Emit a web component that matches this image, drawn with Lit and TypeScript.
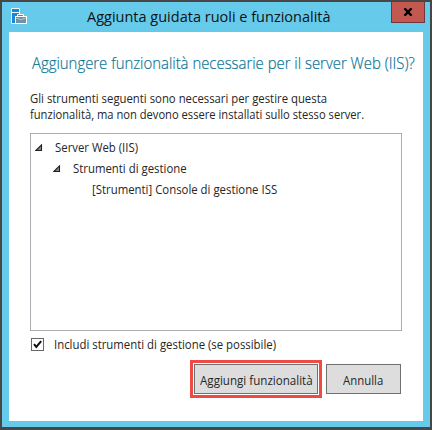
import { LitElement, html, css } from "lit";
import { customElement, state } from "lit/decorators.js";

const arrow = html`<svg class="arrow" width="8" height="8" viewBox="0 0 8 8">
  <path d="M0.9 6.5 L6.5 0.9 V6.5 Z" fill="#888" stroke="#222" stroke-width="1.1" />
</svg>`;

@customElement("app-root")
export class AppRoot extends LitElement {
  @state() private includeTools = true;

  static styles = css`
    :host {
      display: block;
      width: 432px;
      height: 430px;
      font-family: "Open Sans", "Noto Sans", sans-serif;
      font-size: 12px;
      color: #262626;
      white-space: nowrap;
    }
    * { box-sizing: border-box; }
    .window {
      width: 432px;
      height: 430px;
      border: 2px solid #474747;
      border-bottom-width: 3px;
      background: #66caea;
      display: flex;
      flex-direction: column;
      padding: 0 7px 5px;
    }
    .titlebar {
      height: 29px;
      flex: none;
      display: flex;
      align-items: flex-start;
    }
    .app-icon { margin: 6px 0 0 2px; display: block; }
    .title {
      flex: 1;
      margin: 4px 0 0 59px;
      font-size: 14.5px;
      line-height: 22px;
      color: #111;
    }
    .close {
      width: 34px;
      height: 21px;
      margin-right: -2px;
      padding: 0;
      background: #c35850;
      border: 1px solid #70383c;
      border-top: 0;
      display: flex;
      align-items: center;
      justify-content: center;
    }
    .body {
      flex: 1;
      background: #fff;
      padding: 19px 21px 0;
      border-top: 1px solid #8fb9cb;
      border-bottom: 1px solid #8fb9cb;
    }
    h1 {
      margin: 0 0 0 2px;
      font-size: 16.5px;
      line-height: 24px;
      font-weight: 300;
      color: #0b7596;
      -webkit-text-stroke: 0.2px #0b7596;
      width: max-content;
      transform: scaleX(0.903);
      transform-origin: left;
    }
    .intro { margin: 16px 0 0; line-height: 16px; }
    .line { display: block; width: max-content; }
    .narrow { display: inline-block; transform: scaleX(0.948); transform-origin: left; }
    .p1 { transform: scaleX(0.945); transform-origin: left; }
    .p2 { transform: scaleX(0.931); transform-origin: left; }
    .tree {
      margin-top: 10px;
      width: 372px;
      height: 198px;
      border: 1px solid #abadb3;
      padding: 3px 4px;
    }
    .node { display: flex; align-items: center; height: 21px; }
    .l2 { padding-left: 18px; }
    .l3 { padding-left: 57px; }
    .arrow { margin-right: 12px; }
    .check { display: flex; align-items: center; margin: 5px 0 0 1px; height: 17px; }
    .box {
      width: 13px;
      height: 13px;
      border: 1px solid #666;
      margin-right: 10px;
      display: flex;
    }
    .actions { display: flex; align-items: center; justify-content: flex-end; gap: 4px; margin: 7px 1px 0 0; }
    .focus { border: 3px solid #ee4b47; padding: 1px; }
    .btn {
      display: flex;
      align-items: center;
      justify-content: center;
      height: 30px;
      padding: 2px 0 0;
      font: inherit;
      color: inherit;
      background: #ddd;
      border: 1px solid #707070;
    }
    .btn .narrow { transform-origin: center; }
    .btn .wide { transform: scaleX(0.965); }
    .add { width: 124px; }
    .cancel { width: 75px; }
  `;

  render() {
    return html`<div class="window">
      <div class="titlebar">
        <svg class="app-icon" width="17" height="17" viewBox="0 0 17 17">
          <path d="M0.5 0.5 H8.5 V15.5 H0.5 Z" fill="#1c86d6" stroke="#e8f6fc" />
          <path d="M1 4.5 H8" stroke="#e8f6fc" />
          <path d="M6.5 9 V6.5 H12.5 V9" fill="none" stroke="#fff" />
          <path d="M7.5 9 V7.5 H11.5 V9" fill="none" stroke="#6a7f8c" />
          <rect x="4.5" y="8.5" width="11" height="7" fill="#7391a5" stroke="#fff" />
          <path d="M5 10.5 H8 V11.5 H12 V10.5 H15" fill="none" stroke="#c9d8e1" stroke-width=".6" />
        </svg>
        <div class="title">Aggiunta guidata ruoli e funzionalità</div>
        <button class="close" aria-label="Chiudi">
          <svg width="10" height="8" viewBox="0 0 10 8"><path d="M1.5 0.3 L8.5 7.7 M8.5 0.3 L1.5 7.7" stroke="#000" stroke-width="2.4" /></svg>
        </button>
      </div>
      <div class="body">
        <h1>Aggiungere funzionalità necessarie per il server Web (IIS)?</h1>
        <p class="intro">
          <span class="line p1">Gli strumenti seguenti sono necessari per gestire questa</span>
          <span class="line p2">funzionalità, ma non devono essere installati sullo stesso server.</span>
        </p>
        <div class="tree">
          <div class="node">${arrow}<span class="narrow">Server Web (IIS)</span></div>
          <div class="node l2">${arrow}<span class="narrow">Strumenti di gestione</span></div>
          <div class="node l3"><span class="narrow">[Strumenti] Console di gestione ISS</span></div>
        </div>
        <div class="check" @click=${() => (this.includeTools = !this.includeTools)}>
          <span class="box">${this.includeTools
            ? html`<svg width="11" height="11" viewBox="0 0 11 11"><path d="M2 5.2 L4.3 8 L9.2 2.2" fill="none" stroke="#111" stroke-width="2" /></svg>`
            : ""}</span>
          <span class="narrow">Includi strumenti di gestione (se possibile)</span>
        </div>
        <div class="actions">
          <div class="focus"><button class="btn add"><span class="narrow wide">Aggiungi funzionalità</span></button></div>
          <button class="btn cancel"><span class="narrow">Annulla</span></button>
        </div>
      </div>
    </div>`;
  }
}
